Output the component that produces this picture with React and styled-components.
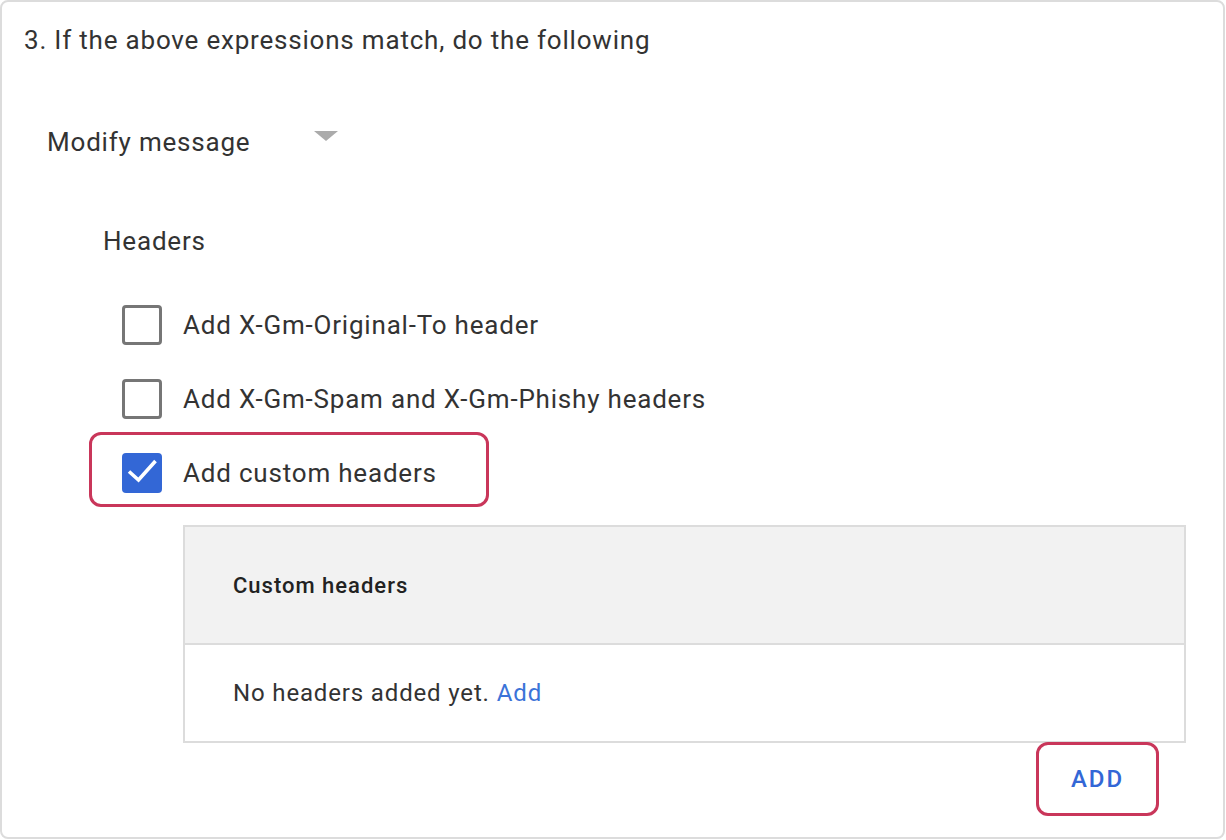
import React from "react";
import styled, { createGlobalStyle } from "styled-components";

const Global = createGlobalStyle`
  html, body { margin: 0; padding: 0; background: #fff; }
  body { font-family: Roboto, "Noto Sans", Arial, sans-serif; color: #333; }
`;

const Card = styled.div`
  box-sizing: border-box;
  width: 1225px;
  height: 839px;
  border: 2px solid #dcdcdc;
  border-radius: 8px;
  padding: 22px 0 0 22px;
  background: #fff;
`;

const Title = styled.div`
  font-size: 26px;
  letter-spacing: 0.8px;
  line-height: 32px;
  color: #333;
`;

const Select = styled.div`
  display: flex;
  align-items: center;
  margin: 66px 0 0 23px;
  height: 40px;
  font-size: 26px;
  letter-spacing: 0.8px;
  color: #333;
`;

const Caret = styled.span`
  width: 0;
  height: 0;
  margin: -12px 0 0 64px;
  border-left: 12px solid transparent;
  border-right: 12px solid transparent;
  border-top: 10px solid #ababab;
`;

const Section = styled.div`
  margin: 63px 0 0 79px;
`;

const Label = styled.div`
  font-size: 26px;
  letter-spacing: 0.8px;
  line-height: 32px;
  color: #333;
`;

const Options = styled.div`
  display: flex;
  flex-direction: column;
  gap: 34px;
  margin-top: 48px;
  margin-left: 19px;
`;

const Option = styled.label`
  position: relative;
  display: flex;
  align-items: center;
  gap: 21px;
  height: 40px;
  font-size: 26px;
  letter-spacing: 0.8px;
  color: #333;
`;

const Box = styled.span`
  box-sizing: border-box;
  width: 40px;
  height: 40px;
  border-radius: 4px;
  border: ${(p) => (p.$checked ? "none" : "3px solid #767676")};
  background: ${(p) => (p.$checked ? "#3367d6" : "#fff")};
  display: flex;
  align-items: center;
  justify-content: center;
`;

const Highlight = styled.span`
  position: absolute;
  left: -33px;
  top: -21px;
  width: 400px;
  height: 75px;
  box-sizing: border-box;
  border: 3px solid #c9365a;
  border-radius: 12px;
  pointer-events: none;
`;

const Table = styled.div`
  box-sizing: border-box;
  width: 1003px;
  margin: 32px 0 0 159px;
  border: 2px solid #dcdcdc;
`;

const TableHead = styled.div`
  height: 116px;
  background: #f2f2f2;
  border-bottom: 2px solid #dcdcdc;
  display: flex;
  align-items: center;
  padding-left: 48px;
  font-size: 22px;
  font-weight: 500;
  letter-spacing: 1px;
  color: #222;
`;

const TableRow = styled.div`
  height: 96px;
  display: flex;
  align-items: center;
  padding-left: 48px;
  font-size: 24px;
  letter-spacing: 0.85px;
  color: #333;
`;

const Link = styled.a`
  color: #3b73d8;
  margin-left: 7px;
  text-decoration: none;
`;

const Footer = styled.div`
  display: flex;
  justify-content: flex-end;
  width: 1162px;
  margin-top: -1px;
`;

const AddButton = styled.button`
  box-sizing: border-box;
  width: 123px;
  height: 74px;
  margin-right: 27px;
  border: 3px solid #c9365a;
  border-radius: 12px;
  background: #fff;
  color: #3367d6;
  font-family: Roboto, Arial, sans-serif;
  font-size: 24px;
  font-weight: 500;
  letter-spacing: 2px;
`;

const Check = () => (
  <svg width="40" height="40" viewBox="0 0 40 40">
    <path d="M7 18.5l9.5 8.5L33.5 8" fill="none" stroke="#fff" strokeWidth="3.6" />
  </svg>
);

export default function App() {
  return (
    <>
      <Global />
      <Card>
        <Title>3. If the above expressions match, do the following</Title>
        <Select>
          Modify message
          <Caret />
        </Select>
        <Section>
          <Label>Headers</Label>
          <Options>
            <Option>
              <Box />
              Add X-Gm-Original-To header
            </Option>
            <Option>
              <Box />
              Add X-Gm-Spam and X-Gm-Phishy headers
            </Option>
            <Option>
              <Box $checked>
                <Check />
              </Box>
              Add custom headers
              <Highlight />
            </Option>
          </Options>
        </Section>
        <Table>
          <TableHead>Custom headers</TableHead>
          <TableRow>
            No headers added yet.<Link href="#">Add</Link>
          </TableRow>
        </Table>
        <Footer>
          <AddButton>ADD</AddButton>
        </Footer>
      </Card>
    </>
  );
}
